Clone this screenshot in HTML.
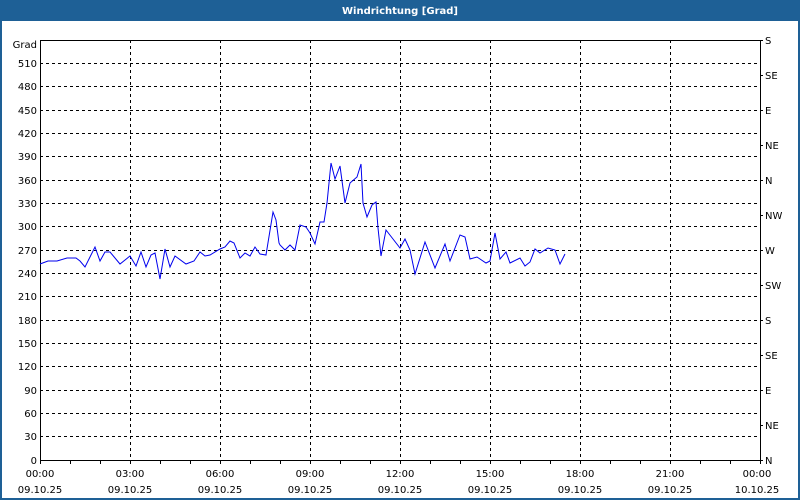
<!DOCTYPE html>
<html><head><meta charset="utf-8"><style>
html,body{margin:0;padding:0;width:800px;height:500px;overflow:hidden;background:#fff}
svg{display:block}
text{font-family:"DejaVu Sans","Liberation Sans",sans-serif;font-size:10px;fill:#000}
</style></head><body>
<svg width="800" height="500" viewBox="0 0 800 500" xmlns="http://www.w3.org/2000/svg">
<rect x="0" y="0" width="800" height="500" fill="#1e6096"/>
<rect x="2" y="21" width="796" height="477" fill="#fff"/>
<text x="400" y="14" text-anchor="middle" style="fill:#fff;font-weight:bold;font-size:10px">Windrichtung [Grad]</text>
<g stroke="#000" stroke-width="1" stroke-dasharray="3,3" fill="none" shape-rendering="crispEdges">
<path d="M40 436.5H760M40 413.5H760M40 390.5H760M40 366.5H760M40 343.5H760M40 320.5H760M40 296.5H760M40 273.5H760M40 250.5H760M40 226.5H760M40 203.5H760M40 180.5H760M40 156.5H760M40 133.5H760M40 110.5H760M40 86.5H760M40 63.5H760"/>
<path d="M130.5 40V460M220.5 40V460M310.5 40V460M400.5 40V460M490.5 40V460M580.5 40V460M670.5 40V460"/>
</g>
<g stroke="#000" stroke-width="1" fill="none" shape-rendering="crispEdges">
<path d="M40.5 40V460.5H760.5V40M40 40.5H761"/>
<path d="M70.5 460v4M100.5 460v4M130.5 460v4M160.5 460v4M190.5 460v4M220.5 460v4M250.5 460v4M280.5 460v4M310.5 460v4M340.5 460v4M370.5 460v4M400.5 460v4M430.5 460v4M460.5 460v4M490.5 460v4M520.5 460v4M550.5 460v4M580.5 460v4M610.5 460v4M640.5 460v4M670.5 460v4M700.5 460v4M730.5 460v4M760.5 460v4M40.5 460v4"/>
<path d="M760 40.5h3M760 75.5h3M760 110.5h3M760 145.5h3M760 180.5h3M760 215.5h3M760 250.5h3M760 285.5h3M760 320.5h3M760 355.5h3M760 390.5h3M760 425.5h3M760 460.5h3"/>
</g>
<polyline fill="none" stroke="#0000ee" stroke-width="1" points="40,264 48,261 57,261 67,258 76,258 80,261 85,267 90,257 95,247 100,261 105,252 110,252 120,264 130,256 136,266 141,252 146,267 151,255 155,253 160,279 165,249 170,267 175,256 186,264 194,261 200,252 205,256 210,255 220,249 225,247 230,241 234,243 240,258 245,253 250,256 255,247 260,254 266,255 273,212 276,220 279,243 280,245 285,250 290,245 295,250 300,225 306,227 310,233 315,244 320,222 324,222 327,203 331,163 335,179 340,166 345,203 350,183 357,177 361,164 363,203 367,217 372,205 376,202 378,228 381,256 386,230 400,248 405,239 410,250 415,274 425,242 435,268 445,244 450,261 460,235 465,237 470,259 477,257 486,263 490,261 495,233 500,259 506,252 510,263 520,258 525,266 530,262 535,249 540,253 548,248 555,250 560,264 565,254"/>
<g text-anchor="end">
<text x="37" y="48">Grad</text>
<text x="37" y="67">510</text><text x="37" y="90">480</text><text x="37" y="114">450</text><text x="37" y="137">420</text><text x="37" y="160">390</text><text x="37" y="184">360</text><text x="37" y="207">330</text><text x="37" y="230">300</text><text x="37" y="254">270</text><text x="37" y="277">240</text><text x="37" y="300">210</text><text x="37" y="324">180</text><text x="37" y="347">150</text><text x="37" y="370">120</text><text x="37" y="394">90</text><text x="37" y="417">60</text><text x="37" y="440">30</text><text x="37" y="464">0</text>
</g>
<g>
<text x="765" y="44">S</text><text x="765" y="79">SE</text><text x="765" y="114">E</text><text x="765" y="149">NE</text><text x="765" y="184">N</text><text x="765" y="219">NW</text><text x="765" y="254">W</text><text x="765" y="289">SW</text><text x="765" y="324">S</text><text x="765" y="359">SE</text><text x="765" y="394">E</text><text x="765" y="429">NE</text><text x="765" y="464">N</text>
</g>
<g text-anchor="middle">
<text x="40" y="477">00:00</text><text x="130" y="477">03:00</text><text x="220" y="477">06:00</text><text x="310" y="477">09:00</text><text x="400" y="477">12:00</text><text x="490" y="477">15:00</text><text x="580" y="477">18:00</text><text x="670" y="477">21:00</text><text x="757" y="477">00:00</text>
<text x="40" y="493">09.10.25</text><text x="130" y="493">09.10.25</text><text x="220" y="493">09.10.25</text><text x="310" y="493">09.10.25</text><text x="400" y="493">09.10.25</text><text x="490" y="493">09.10.25</text><text x="580" y="493">09.10.25</text><text x="670" y="493">09.10.25</text><text x="757" y="493">10.10.25</text>
</g>
</svg>
</body></html>
